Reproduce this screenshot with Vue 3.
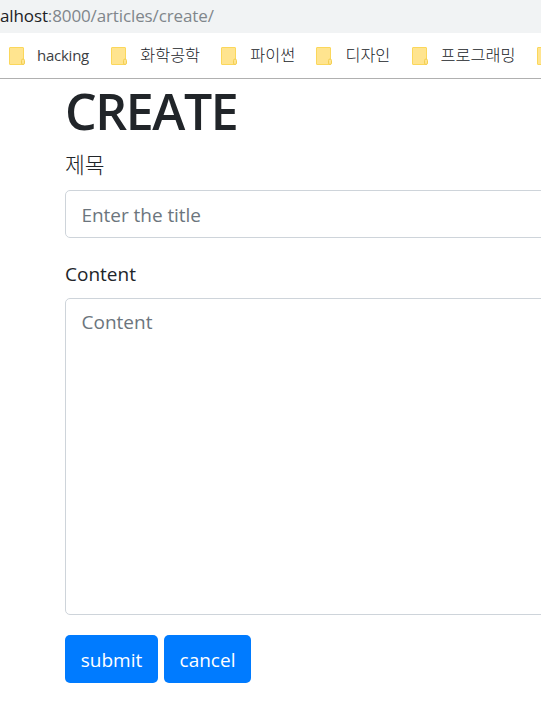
<script setup>
const bookmarks = ['hacking', '화학공학', '파이썬', '디자인', '프로그래밍', '']
</script>

<template>
  <div class="window">
    <div class="address"><span class="host">alhost</span>:8000/articles/create/</div>
    <nav class="bookmarks">
      <a v-for="(name, i) in bookmarks" :key="i" class="bookmark" :class="{ latin: i === 0 }">
        <svg class="folder" width="16" height="18" viewBox="0 0 16 18">
          <path d="M1 .5H14Q14.5 .5 14.5 1V17.5H1Q.5 17.5 .5 17V1Q.5 .5 1 .5Z" fill="#ffe48f" stroke="#fbd75b" />
          <rect x="12.5" y="12" width="3" height="5.5" rx="1.5" fill="#ffe48f" stroke="#f3cf52" />
        </svg>
        <span class="name">{{ name }}</span>
      </a>
    </nav>
    <main class="page">
      <h1>CREATE</h1>
      <form @submit.prevent>
        <label class="ko" for="title">제목</label>
        <input id="title" type="text" placeholder="Enter the title" />
        <label class="content-label" for="content">Content</label>
        <textarea id="content" placeholder="Content"></textarea>
        <div class="actions">
          <button class="submit" type="submit">submit</button>
          <button class="cancel" type="button">cancel</button>
        </div>
      </form>
    </main>
  </div>
</template>

<style>
body {
  background: #fff;
  overflow: hidden;
}
</style>

<style scoped>
.window {
  width: 541px;
  height: 710px;
  overflow: hidden;
  font-family: "Open Sans", "Noto Sans CJK KR", sans-serif;
  color: #212529;
}
.window * {
  box-sizing: border-box;
}
.address {
  height: 33px;
  line-height: 32px;
  background: #f1f3f4;
  color: #80868b;
  font-size: 17px;
  letter-spacing: -0.12px;
  white-space: nowrap;
}
.host {
  color: #202124;
}
.bookmarks {
  display: flex;
  gap: 21.2px;
  align-items: center;
  height: 46px;
  padding-left: 9px;
  border-bottom: 1px solid #b0b0b0;
  overflow: hidden;
}
.bookmark {
  display: flex;
  flex: none;
  align-items: center;
  gap: 13px;
  font-family: "Noto Sans CJK KR", sans-serif;
  font-weight: 300;
  font-size: 16.3px;
  line-height: 24px;
  color: #202327;
}
.name {
  padding-bottom: 3px;
}
.latin {
  gap: 12px;
  font-family: "Open Sans", sans-serif;
  font-weight: 400;
  font-size: 15px;
  letter-spacing: -0.25px;
  color: #3c4043;
}
.latin .name {
  padding: 0 1px 2px 0;
}
.folder {
  flex: none;
}
.page {
  width: 700px;
  padding-left: 65px;
}
h1 {
  margin: 0;
  padding-top: 2px;
  font-size: 50px;
  font-weight: 600;
  line-height: 60px;
  letter-spacing: -1.4px;
}
form {
  display: flex;
  flex-direction: column;
  font-size: 19px;
}
label {
  height: 30px;
  line-height: 30px;
}
.ko {
  margin: 8px 0 11px;
  font-family: "Noto Sans CJK KR", sans-serif;
  font-size: 21.5px;
  font-weight: 300;
}
.content-label {
  margin: 21px 0 9px;
}
input,
textarea {
  width: 100%;
  border: 1px solid #ced4da;
  border-radius: 5px;
  padding: 8px 15.5px;
  font: inherit;
  line-height: 30px;
  background: #fff;
  outline: none;
  resize: none;
}
input {
  height: 48px;
  padding: 9px 15.5px 7px;
  letter-spacing: -0.05px;
}
textarea {
  display: block;
  height: 317px;
}
input::placeholder,
textarea::placeholder {
  color: #6c757d;
  opacity: 1;
}
.actions {
  display: flex;
  gap: 6px;
  margin-top: 20px;
}
button {
  height: 48px;
  padding: 1px 0 0;
  border: 0;
  border-radius: 5px;
  background: #007bff;
  color: #fff;
  font: inherit;
}
.submit {
  width: 93px;
}
.cancel {
  width: 87px;
}
</style>
